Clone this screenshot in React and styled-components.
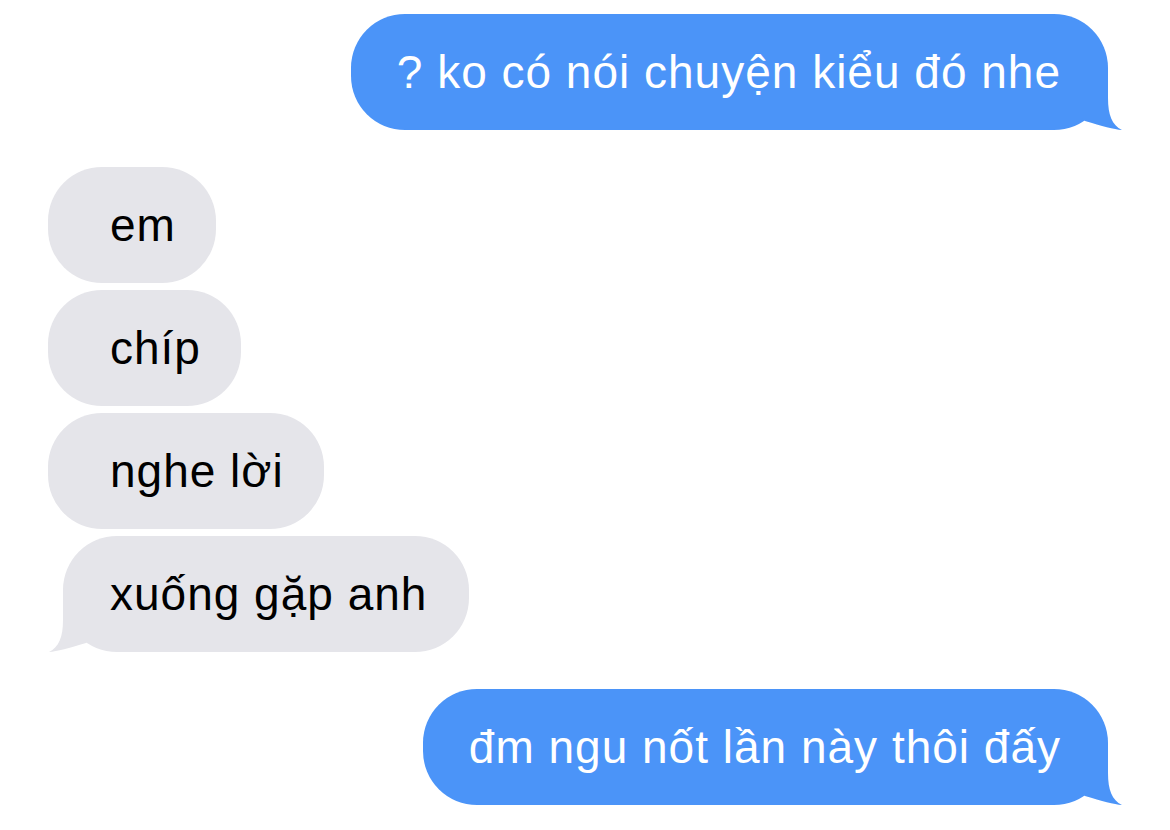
import React from 'react';
import styled, { createGlobalStyle } from 'styled-components';

const GlobalStyle = createGlobalStyle`
  html, body {
    margin: 0;
    padding: 0;
    background: #ffffff;
  }
  body {
    font-family: "Liberation Sans", Arial, "Noto Sans", sans-serif;
  }
`;

const BLUE = '#4b94f8';
const GRAY = '#e5e5ea';

const messages = [
  { id: 1, me: true, text: '? ko có nói chuyện kiểu đó nhe', tail: true },
  { id: 2, me: false, text: 'em' },
  { id: 3, me: false, text: 'chíp' },
  { id: 4, me: false, text: 'nghe lời' },
  { id: 5, me: false, text: 'xuống gặp anh', tail: true },
  { id: 6, me: true, text: 'đm ngu nốt lần này thôi đấy', tail: true },
];

function Tail({ me }) {
  return (
    <TailSvg $me={me} width="42" height="62" viewBox="0 0 42 62">
      <path
        d="M0 0 L26 0 L26 30 C26 47, 30 57, 40 62 C32 61.5, 20 58, 3 53 L0 50 Z"
        fill={me ? BLUE : GRAY}
      />
    </TailSvg>
  );
}

export default function App() {
  // group consecutive messages from the same side so the gap stays tight
  const groups = [];
  messages.forEach((m) => {
    const last = groups[groups.length - 1];
    if (last && last.me === m.me) last.items.push(m);
    else groups.push({ me: m.me, items: [m] });
  });

  return (
    <>
      <GlobalStyle />
      <Thread>
        {groups.map((g, i) => (
          <Group key={i} $me={g.me}>
            {g.items.map((m) => (
              <Bubble key={m.id} $me={m.me} $tail={m.tail}>
                <Text>{m.text}</Text>
                {m.tail && <Tail me={m.me} />}
              </Bubble>
            ))}
          </Group>
        ))}
      </Thread>
    </>
  );
}

const Thread = styled.div`
  display: flex;
  flex-direction: column;
  gap: 37px;
  padding: 14px 62px 0 48px;
  width: 1170px;
  box-sizing: border-box;
`;

const Group = styled.div`
  display: flex;
  flex-direction: column;
  align-items: ${(p) => (p.$me ? 'flex-end' : 'flex-start')};
  gap: 7px;
`;

const Bubble = styled.div`
  position: relative;
  height: 116px;
  display: flex;
  align-items: center;
  box-sizing: border-box;
  border-radius: 54px;
  font-size: 46px;
  letter-spacing: 1px;
  white-space: nowrap;
  background: ${(p) => (p.$me ? BLUE : GRAY)};
  color: ${(p) => (p.$me ? '#ffffff' : '#000000')};
  padding: ${(p) =>
    p.$me ? '0 47px 0 46px' : p.$tail ? '0 42px 0 47px' : '0 40px 0 62px'};
  margin-left: ${(p) => (!p.$me && p.$tail ? '15px' : '0')};
`;

const Text = styled.span`
  position: relative;
  z-index: 1;
`;

const TailSvg = styled.svg`
  position: absolute;
  bottom: 0;
  ${(p) => (p.$me ? 'right: -16px;' : 'left: -16px; transform: scaleX(-1);')}
`;
